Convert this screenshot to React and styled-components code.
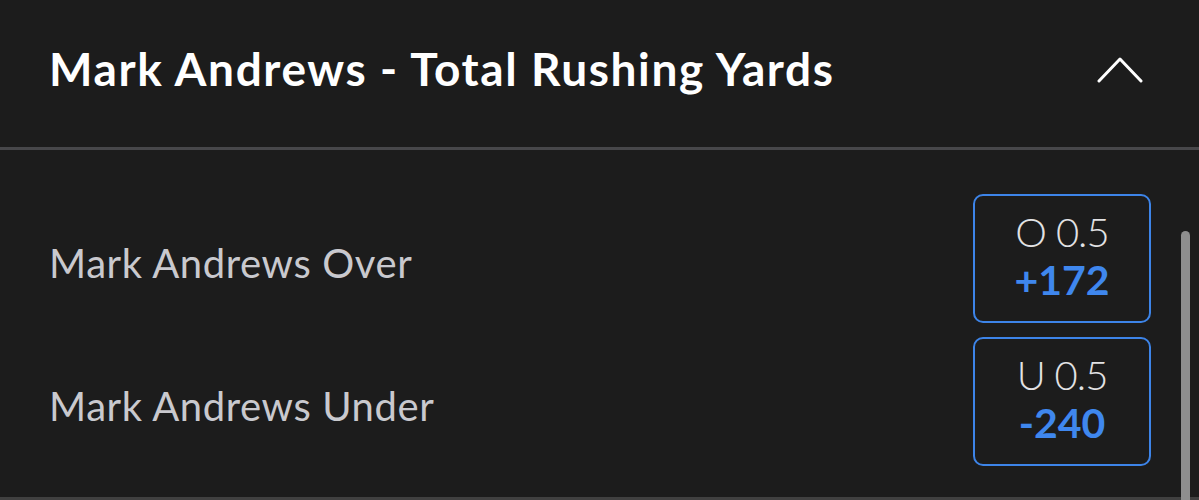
import React from 'react';
import styled, { createGlobalStyle } from 'styled-components';

const GlobalStyle = createGlobalStyle`
    html, body {
        margin: 0;
        padding: 0;
        background: #1c1c1c;
    }
    body {
        font-family: Lato, "Open Sans", "Liberation Sans", sans-serif;
    }
`

const markets = [
    { label: 'Mark Andrews Over', line: 'O 0.5', odds: '+172' },
    { label: 'Mark Andrews Under', line: 'U 0.5', odds: '-240' },
];

const Panel = styled.div`
    position: relative;
    width: 1199px;
    height: 500px;
    overflow: hidden;
    background: #1c1c1c;
`
const Header = styled.div`
    display: flex;
    align-items: center;
    justify-content: space-between;
    height: 147px;
    padding: 0 56px 0 49px;
    border-bottom: 3px solid #47474a;
`
const Title = styled.h1`
    margin: 0;
    margin-top: -10px;
    font-size: 46px;
    font-weight: 700;
    color: #ffffff;
    letter-spacing: 1.6px;
`
const Chevron = styled.svg`
    width: 46px;
    height: 28px;
    margin-top: -8px;
`
const Body = styled.div`
    display: flex;
    flex-direction: column;
    gap: 14px;
    padding: 44px 48px 31px 49px;
    border-bottom: 3px solid #404040;
`
const Row = styled.div`
    display: flex;
    align-items: center;
    justify-content: space-between;
`
const Label = styled.span`
    font-size: 40px;
    font-weight: 400;
    color: #c9c9ce;
    letter-spacing: 0.6px;
    margin-top: 8px;
`
const OddsButton = styled.button`
    display: flex;
    flex-direction: column;
    align-items: center;
    justify-content: center;
    width: 178px;
    height: 129px;
    padding: 0 0 6px;
    background: transparent;
    border: 2px solid #3d84e8;
    border-radius: 10px;
    font-family: inherit;
    cursor: pointer;
`
const Line = styled.span`
    font-size: 40px;
    line-height: 48px;
    font-weight: 300;
    letter-spacing: -1px;
    color: #e2e2e4;
`
const Odds = styled.span`
    font-size: 41px;
    line-height: 48px;
    font-weight: 700;
    color: #3f87ee;
`
const Scrollbar = styled.div`
    position: absolute;
    left: 1181px;
    top: 231px;
    width: 9px;
    height: 300px;
    border-radius: 5px;
    background: #8e8e8e;
`

const App = () => {
    return (
        <Panel>
            <GlobalStyle />
            <Header>
                <Title>Mark Andrews - Total Rushing Yards</Title>
                <Chevron viewBox="0 0 46 28" fill="none">
                    <path d="M2 25 L23 3 L44 25" stroke="#ffffff" strokeWidth="3" strokeLinecap="round" strokeLinejoin="round" />
                </Chevron>
            </Header>
            <Body>
                {markets.map((m) => (
                    <Row key={m.label}>
                        <Label>{m.label}</Label>
                        <OddsButton>
                            <Line>{m.line}</Line>
                            <Odds>{m.odds}</Odds>
                        </OddsButton>
                    </Row>
                ))}
            </Body>
            <Scrollbar />
        </Panel>
    );
};

export default App;
